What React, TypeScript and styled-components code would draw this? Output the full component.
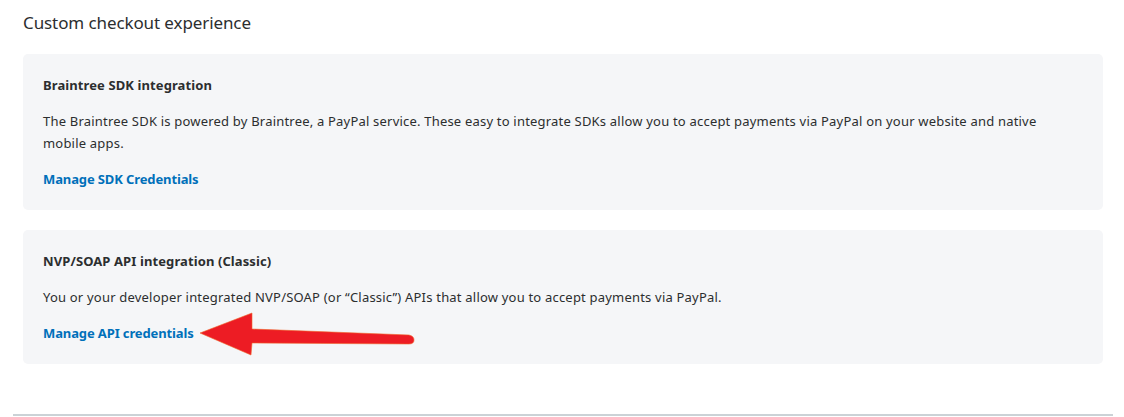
import React from "react";
import styled, { createGlobalStyle } from "styled-components";

const Global = createGlobalStyle`
  html, body { margin: 0; padding: 0; background: #ffffff; }
  body { font-family: "Noto Sans", "Open Sans", Arial, sans-serif; color: #2c2e2f; }
`;

const Page = styled.div`
  position: relative;
  padding: 0 11px 0 13px;
  width: 1100px;
`;

const Heading = styled.h2`
  margin: 0;
  padding: 11px 10px 0;
  font-size: 17px;
  font-weight: 400;
  line-height: 24px;
  letter-spacing: -0.1px;
  color: #2c2e2f;
`;

const CardList = styled.div`
  display: flex;
  flex-direction: column;
  gap: 20px;
  margin: 19px 10px 0;
`;

const Card = styled.section`
  background: #f5f6f8;
  border-radius: 5px;
  padding: 22px 20px;
  display: flex;
  flex-direction: column;
  align-items: flex-start;
  gap: 16px;
`;

const CardTitle = styled.h3`
  margin: 0;
  font-size: 13px;
  font-weight: 700;
  line-height: 18px;
  letter-spacing: 0.1px;
  color: #2c2e2f;
`;

const CardText = styled.p`
  margin: 0;
  max-width: 1010px;
  font-size: 13px;
  line-height: 22px;
  letter-spacing: 0.2px;
  color: #2c2e2f;
`;

const CardLink = styled.a`
  font-size: 13px;
  font-weight: 700;
  line-height: 18px;
  letter-spacing: -0.12px;
  color: #0070ba;
  text-decoration: none;
`;

const Divider = styled.hr`
  margin: 50px 0 0;
  border: 0;
  border-top: 2px solid #cbd2d6;
`;

const Arrow = styled.svg`
  position: absolute;
  left: 0;
  top: 0;
  pointer-events: none;
`;

export default function App() {
  return (
    <>
      <Global />
      <Page>
        <Heading>Custom checkout experience</Heading>
        <CardList>
          <Card>
            <CardTitle>Braintree SDK integration</CardTitle>
            <CardText>
              The Braintree SDK is powered by Braintree, a PayPal service. These easy to integrate SDKs allow you to accept payments via PayPal on your website and native mobile apps.
            </CardText>
            <CardLink href="#">Manage SDK Credentials</CardLink>
          </Card>
          <Card>
            <CardTitle>NVP/SOAP API integration (Classic)</CardTitle>
            <CardText>
              You or your developer integrated NVP/SOAP (or “Classic”) APIs that allow you to accept payments via PayPal.
            </CardText>
            <CardLink href="#">Manage API credentials</CardLink>
          </Card>
        </CardList>
        <Divider />
        <Arrow width="1124" height="417" viewBox="0 0 1124 417">
          <path
            d="M200 333 L252 313 L252 329 L409 335 Q414 336 414 340 Q414 344 409 344 L252 343 L251 355 Z"
            fill="#ed1c24"
            stroke="#f0642a"
            strokeWidth="0.6"
            strokeLinejoin="round"
          />
        </Arrow>
      </Page>
    </>
  );
}
